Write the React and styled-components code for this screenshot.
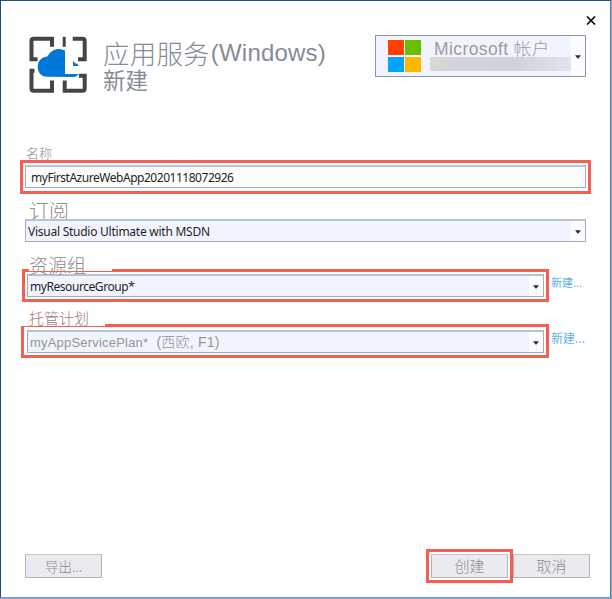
import React from "react";
import styled, { createGlobalStyle } from "styled-components";

const cjk = `"Noto Sans CJK SC", sans-serif`;

const Global = createGlobalStyle`
  * { box-sizing: border-box; }
  body { margin: 0; background: #8ea3cc; overflow: hidden; }
`;

const Desktop = styled.div`
  width: 612px;
  height: 599px;
  padding: 0 1px 1px 0;
  background: #8ea4cf;
`;

const Dialog = styled.main`
  display: flex;
  flex-direction: column;
  width: 611px;
  height: 598px;
  border: 1px solid #24488c;
  border-right-color: #5f7bb3;
  border-bottom-color: #7d94c3;
  background: #fff;
  font-family: "Liberation Sans", ${cjk};
  color: #8f8f8f;
`;

const Header = styled.header`
  display: flex;
  height: 144px;
  padding: 34px 0 0 27px;
`;

const Logo = styled.svg`
  flex: none;
  width: 60px;
  height: 60px;
`;

const Titles = styled.div`
  width: 256px;
  margin: 1px 0 0 15px;
  color: #858c98;
`;

const Title = styled.h1`
  display: flex;
  align-items: center;
  gap: 1px;
  height: 34px;
  margin: 0;
  font-size: 24px;
  font-weight: 400;
  line-height: 34px;
  letter-spacing: 0.2px;
  white-space: nowrap;
`;

const TitleCjk = styled.span`
  font: 300 26.5px/34px ${cjk};
`;

const Subtitle = styled.h2`
  margin: -4px 0 0;
  font: 400 22.5px/27px ${cjk};
`;

const HeaderRight = styled.div`
  display: flex;
  flex-direction: column;
  gap: 8px;
  width: 223px;
  margin: -22px 0 0 16px;
`;

const Close = styled.button`
  display: grid;
  place-items: center;
  align-self: flex-end;
  width: 14px;
  height: 14px;
  padding: 0;
  border: 0;
  background: none;
`;

const Account = styled.div`
  display: flex;
  width: 211px;
  height: 42px;
  border: 1px solid #8a98ae;
  background: #f1f4fe;
`;

const AccountLogo = styled.div`
  display: grid;
  grid-template-columns: 16px 16px;
  grid-template-rows: 15px 15px;
  gap: 2px 1px;
  width: 33px;
  height: 32px;
  margin: 4px 9px 0 12px;
`;

const Tile = styled.span`
  background: ${(p) => p.$color};
`;

const AccountText = styled.div`
  width: 141px;
`;

const AccountName = styled.div`
  height: 17px;
  padding-left: 4px;
  font: 300 17.5px/27px "Liberation Sans", ${cjk};
  letter-spacing: 0.4px;
  white-space: nowrap;
  color: #9b9ba0;
`;

const Redacted = styled.div`
  height: 14px;
  margin-top: 4px;
  background: linear-gradient(100deg, #d9dacf 0, #d2d4da 20%, #d0d2d9 60%, #e2e5ed 100%);
`;

const Label = styled.label`
  display: block;
  height: ${(p) => p.$h}px;
  padding-top: ${(p) => p.$drop || 0}px;
  margin-left: ${(p) => p.$left}px;
  font: 300 ${(p) => p.$size}px/${(p) => p.$h}px ${cjk};
  color: #8d8d8d;
  white-space: nowrap;
`;

/* Label whose white plate trims the top of the frame below it. */
const PlateLabel = styled(Label)`
  position: relative;
  z-index: 1;
  width: ${(p) => p.$w}px;
  margin-bottom: -2px;
  padding-left: ${(p) => p.$indent || 0}px;
  background: #fff;
  color: ${(p) => p.$color || "#8d8d8d"};
`;

const Row = styled.div`
  display: flex;
  align-items: flex-start;
  margin-left: ${(p) => p.$left}px;
`;

const Highlight = styled.div`
  width: ${(p) => p.$w}px;
  height: ${(p) => p.$h || 33}px;
  padding: ${(p) => p.$pad || "2px"};
  border: 3px solid #f26052;
`;

const Field = styled.div`
  display: flex;
  justify-content: space-between;
  width: ${(p) => p.$w}px;
  height: 23px;
  border: 1px solid #a0acbd;
  border-top: 2px solid #b7c1d0;
  background: ${(p) => (p.$plain ? "#fcfcfc" : "#f1f4fe")};
`;

const Value = styled.span`
  padding-left: ${(p) => p.$pad}px;
  font: 400 12px/21px "Noto Sans", ${cjk};
  letter-spacing: ${(p) => p.$track}px;
  color: #1e1e1e;
  white-space: pre;
`;

const PlanValue = styled.span`
  padding-left: 2px;
  font: 300 14px/21px "Liberation Sans", ${cjk};
  letter-spacing: 0.2px;
  color: #959595;
  white-space: pre;
`;

const PlanName = styled.span`
  font-size: 13px;
`;

const ArrowCell = styled.span`
  display: grid;
  place-items: center;
  width: 14px;
  padding-top: 1px;
  background: #fcfcfc;
`;

const Link = styled.a`
  margin: ${(p) => p.$top}px 0 0 2px;
  font: 400 ${(p) => p.$size}px/16px ${cjk};
  color: #68afe6;
  white-space: nowrap;
`;

const Footer = styled.footer`
  display: flex;
  align-items: flex-start;
  height: 48px;
  margin-top: auto;
  padding-left: 24px;
`;

const Button = styled.button`
  width: 77px;
  height: 24px;
  margin: ${(p) => p.$top || 0}px 0 0;
  padding: 0;
  border: 1px solid #b5b5b5;
  border-top-color: #c6c6c6;
  background: #ebeaf0;
  font: 300 ${(p) => p.$size || 15}px/20px ${cjk};
  color: #8e8e8e;
`;

const CreateFrame = styled(Highlight)`
  margin-left: 324px;
`;

function Arrow() {
  return (
    <ArrowCell>
      <svg width="6" height="4" viewBox="0 0 6 4">
        <path d="M0 .3h6L3.4 3.6h-.8z" fill="#263248" />
      </svg>
    </ArrowCell>
  );
}

export default function App() {
  return (
    <>
      <Global />
      <Desktop>
        <Dialog>
          <Header>
            <Logo viewBox="0 0 60 60">
              <path
                fill="none"
                stroke="#454545"
                strokeWidth="4"
                d="M9.5 24.3H3.5V6Q3.5 3.8 5.7 3.8H24V11.7M44.7 3.8H54.5Q56.7 3.8 56.7 6V24.3H50M6.5 35.7H3.5V53.5Q3.5 55.7 5.7 55.7H24V45.5M36.7 45.5V55.7H54.5Q56.7 55.7 56.7 53.5V40.8H51"
              />
              <path fill="#454545" d="M34.7 1.8h3v10h-3z" />
              <path
                fill="#0078d7"
                d="M19 41.8C13 41.8 9.7 37 9.7 32C9.7 26 14 21.8 19.5 21.5C22 16.5 26.5 14 31 14Q34.5 14 37 15.5V39H50.5Q49 42 45 42zM45 25.8Q46.5 27.5 46.8 28Q50 28.5 51 31H45z"
              />
            </Logo>
            <Titles>
              <Title><TitleCjk>应用服务</TitleCjk>(Windows)</Title>
              <Subtitle>新建</Subtitle>
            </Titles>
            <HeaderRight>
              <Close aria-label="关闭">
                <svg width="10" height="9" viewBox="0 0 10 9">
                  <path d="M1 .5 9 8.5M9 .5 1 8.5" stroke="#111" strokeWidth="1.7" />
                </svg>
              </Close>
              <Account>
                <AccountLogo>
                  <Tile $color="#ff4000" />
                  <Tile $color="#6bbd00" />
                  <Tile $color="#00a5f8" />
                  <Tile $color="#ffb700" />
                </AccountLogo>
                <AccountText>
                  <AccountName>Microsoft 帐户</AccountName>
                  <Redacted />
                </AccountText>
                <Arrow />
              </Account>
            </HeaderRight>
          </Header>
          <Label $h={15} $left={25} $size={13}>名称</Label>
          <Row $left={19}>
            <Highlight $w={571} $h={34}>
              <Field $w={561} $plain><Value $pad={5} $track={-0.47}>myFirstAzureWebApp20201118072926</Value></Field>
            </Highlight>
          </Row>
          <Label $h={25} $drop={4} $left={28} $size={20}>订阅</Label>
          <Row $left={24}>
            <Field $w={561}><Value $pad={2} $track={-0.25}>Visual Studio Ultimate with MSDN</Value><Arrow /></Field>
          </Row>
          <PlateLabel $h={29} $drop={8} $left={28} $w={83} $size={19}>资源组</PlateLabel>
          <Row $left={21}>
            <Highlight $w={527}>
              <Field $w={517}><Value $pad={2} $track={-0.44}>myResourceGroup*</Value><Arrow /></Field>
            </Highlight>
            <Link $top={5} $size={11}>新建...</Link>
          </Row>
          <PlateLabel $h={24} $drop={4} $left={20} $indent={8} $w={84} $size={15} $color="#a87272">托管计划</PlateLabel>
          <Row $left={20}>
            <Highlight $w={528} $h={34} $pad="3px 2px 2px 3px">
              <Field $w={517}>
                <PlanValue><PlanName>myAppServicePlan*</PlanName>  (西欧, F1)</PlanValue>
                <Arrow />
              </Field>
            </Highlight>
            <Link $top={6} $size={12}>新建...</Link>
          </Row>
          <Footer>
            <Button $top={5} $size={13.5}>导出...</Button>
            <CreateFrame $w={87} $h={34}><Button>创建</Button></CreateFrame>
            <Button $top={5}>取消</Button>
          </Footer>
        </Dialog>
      </Desktop>
    </>
  );
}
